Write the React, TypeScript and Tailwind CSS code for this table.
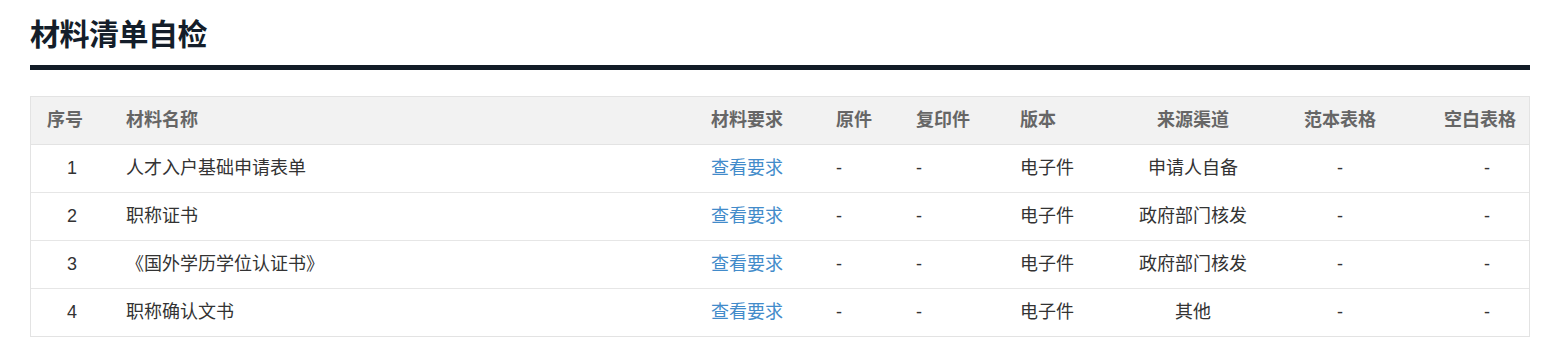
import React from "react";

const rows = [
  { no: "1", name: "人才入户基础申请表单", src: "申请人自备" },
  { no: "2", name: "职称证书", src: "政府部门核发" },
  { no: "3", name: "《国外学历学位认证书》", src: "政府部门核发" },
  { no: "4", name: "职称确认文书", src: "其他" },
];

const grid =
  "grid grid-cols-[65px_615px_125px_80px_104px_100px_146px_148px_115px] items-center";

export default function App() {
  return (
    <div
      className="w-[1547px] h-[361px] bg-white"
      style={{ fontFamily: '"Liberation Sans", "Noto Sans CJK SC", sans-serif' }}
    >
      <div className="ml-[30px] w-[1500px] pt-[20px]">
        <h1 className="text-[30px] leading-[30px] font-bold text-[#141e2a] tracking-[-0.5px]">
          材料清单自检
        </h1>
        <div className="mt-[15px] h-[5px] bg-[#121c27]" />
        <div className="mt-[26px] border border-[#e3e3e3]">
          <div className={`${grid} h-[48px] bg-[#f2f2f2] border-b border-[#e3e3e3] text-[18px] font-bold text-[#666666]`}>
            <div className="pl-[16px]">序号</div>
            <div className="pl-[30px]">材料名称</div>
            <div>材料要求</div>
            <div>原件</div>
            <div>复印件</div>
            <div>版本</div>
            <div className="text-center">来源渠道</div>
            <div className="text-center">范本表格</div>
            <div className="pl-[30px]">空白表格</div>
          </div>
          {rows.map((r, i) => (
            <div
              key={r.no}
              className={`${grid} text-[18px] text-[#333333] ${
                i < rows.length - 1 ? "h-[48px] border-b border-[#e6e6e6]" : "h-[47px]"
              }`}
            >
              <div className="pl-[36px]">{r.no}</div>
              <div className="pl-[30px]">{r.name}</div>
              <div className="text-[#428bca]">查看要求</div>
              <div>-</div>
              <div>-</div>
              <div>电子件</div>
              <div className="text-center">{r.src}</div>
              <div className="text-center">-</div>
              <div className="pl-[70px]">-</div>
            </div>
          ))}
        </div>
      </div>
    </div>
  );
}
